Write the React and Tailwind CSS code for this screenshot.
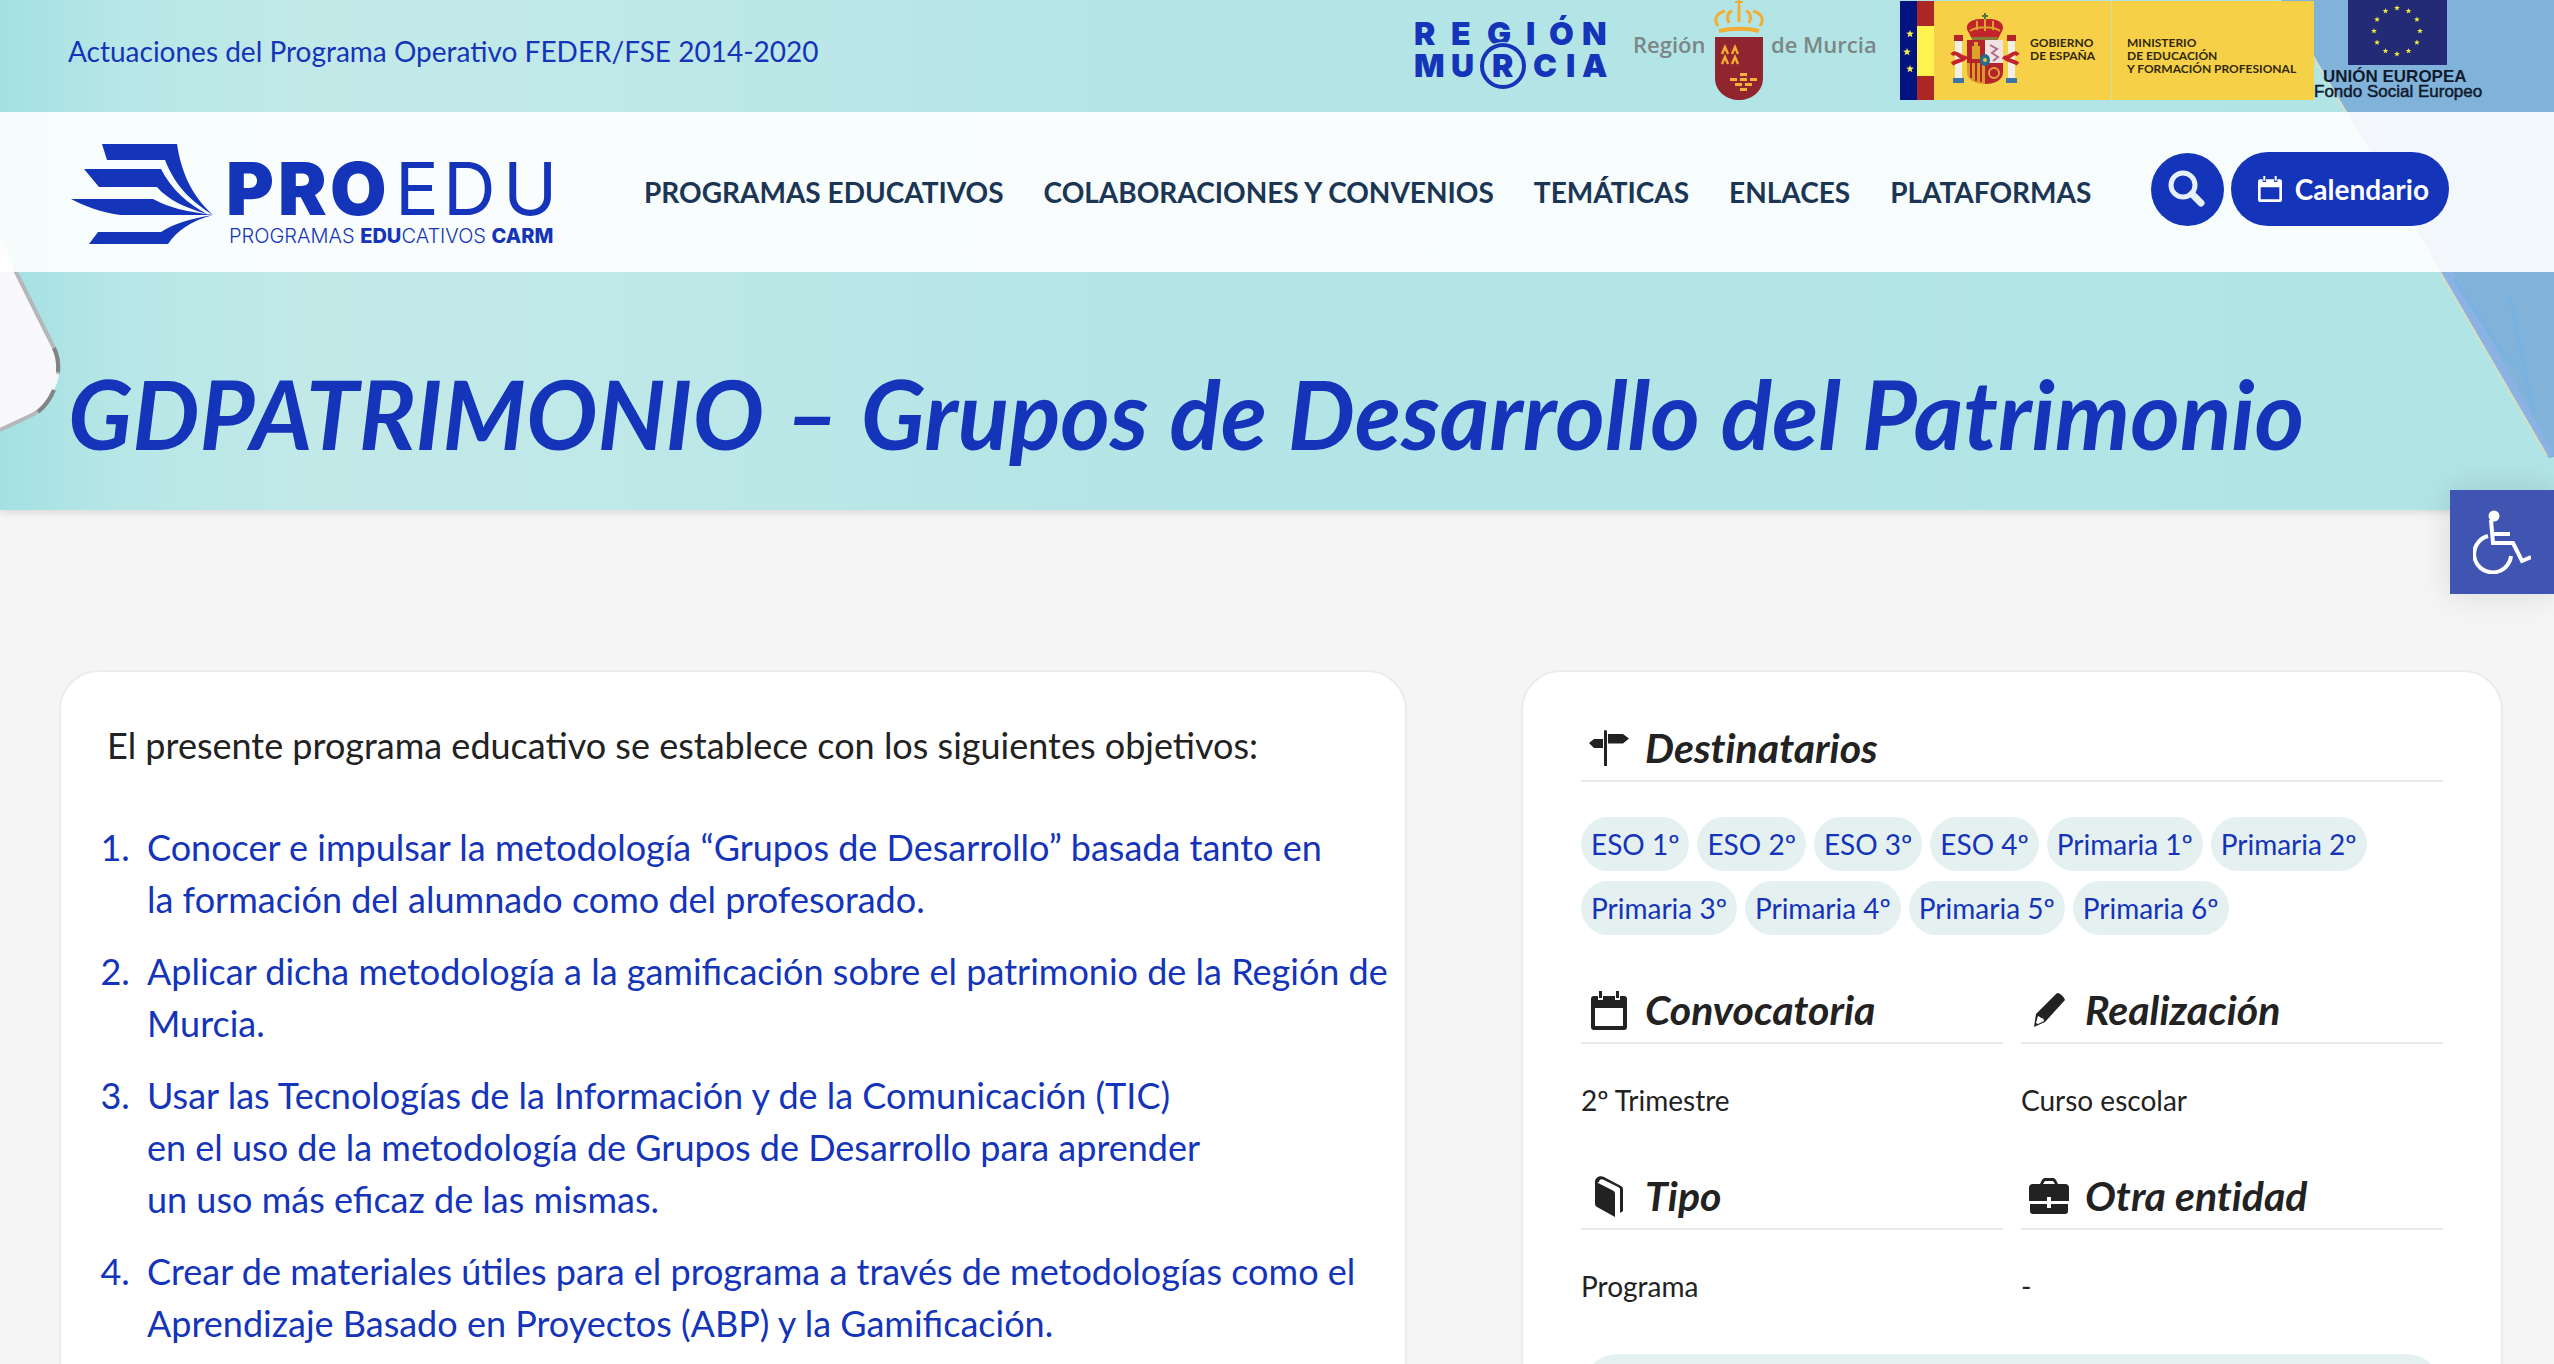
import React from "react";

const BLUE = "#1434ba";

const navItems = [
  "PROGRAMAS EDUCATIVOS",
  "COLABORACIONES Y CONVENIOS",
  "TEMÁTICAS",
  "ENLACES",
  "PLATAFORMAS",
];

const nb = (s) => s.replace(/ /g, "\u00a0");

const objetivos = [
  "Conocer e impulsar la metodología “Grupos de Desarrollo” basada tanto en " +
    nb("la formación del alumnado como del profesorado."),
  "Aplicar dicha metodología a la gamificación sobre el patrimonio de la Región de Murcia.",
  "Usar las Tecnologías de la Información y de la Comunicación (TIC) " +
    nb("en el uso de la metodología de Grupos de Desarrollo para aprender") +
    " " +
    nb("un uso más eficaz de las mismas."),
  "Crear de materiales útiles para el programa a través de metodologías como el Aprendizaje Basado en Proyectos (ABP) y la Gamificación.",
];

const destinatarios = [
  "ESO 1º",
  "ESO 2º",
  "ESO 3º",
  "ESO 4º",
  "Primaria 1º",
  "Primaria 2º",
  "Primaria 3º",
  "Primaria 4º",
  "Primaria 5º",
  "Primaria 6º",
];

function starPoints(cx, cy, r) {
  const pts = [];
  for (let i = 0; i < 10; i++) {
    const a = -Math.PI / 2 + (i * Math.PI) / 5;
    const q = i % 2 ? r * 0.42 : r;
    pts.push(`${(cx + q * Math.cos(a)).toFixed(1)},${(cy + q * Math.sin(a)).toFixed(1)}`);
  }
  return pts.join(" ");
}

function ProeduLogo() {
  return (
    <svg viewBox="0 0 490 104" className="h-[104px] w-[490px] overflow-visible" fill={BLUE} role="img" aria-label="PROEDU">
      <g transform="translate(0 4)">
        <path d="M34 0h75c4 26 13 50 36 71C124 58 107 42 97 16H39z" />
        <path d="M16 25h77c10 20 27 35 46 45C118 64 100 56 89 43H31z" />
        <path d="M3 55h82c14 8 34 13 60 16H52C32 68 16 62 3 55z" />
        <path d="M145 71C122 77 109 87 100 100H21l9-12h63c12-8 28-13 52-17z" />
        <g fontSize="73" fontFamily="Inter, sans-serif">
          <text x="158 210 262" y="71" fontWeight="900">PRO</text>
          <text x="327 375 435" y="71" fontWeight="400">EDU</text>
        </g>
        <text x="161" y="99" fontSize="20" fontFamily="Inter, sans-serif" fontWeight="300">
          PROGRAMAS{" "}
          <tspan fontWeight="800">EDU</tspan>CATIVOS{" "}
          <tspan fontWeight="800">CARM</tspan>
        </text>
      </g>
    </svg>
  );
}

function RegionMurciaLogo() {
  return (
    <svg viewBox="0 0 198 112" className="h-[112px] w-[198px]" fill={BLUE} role="img" aria-label="Región Murcia">
      <g fontFamily="Inter, sans-serif" fontWeight="900" fontSize="32">
        <text x="2 39 75 114 137 170" y="45">REGIÓN</text>
      </g>
      <circle cx="91" cy="66" r="24" fill="#b9e6e6" />
      <circle cx="91" cy="66" r="21" fill="none" stroke={BLUE} strokeWidth="4" />
      <g fontFamily="Inter, sans-serif" fontWeight="900" fontSize="32">
        <text x="2 39 80 121 154 170" y="77">MURCIA</text>
      </g>
    </svg>
  );
}

function EscudoMurciaLogo() {
  const blocks = [
    [26, 0], [16, 5], [26, 5], [36, 5], [21, 10], [31, 10], [26, 15],
  ];
  return (
    <svg viewBox="0 0 250 112" className="h-[112px] w-[250px]" role="img" aria-label="Región de Murcia">
      <g fill="#7c8686" fontFamily="'Open Sans', sans-serif" fontWeight="600" fontSize="22">
        <text x="3" y="53">Región</text>
        <text x="141" y="53">de Murcia</text>
      </g>
      <path d="M85 37h48v41c0 14-12 22-24 22S85 92 85 78z" fill="#90252f" />
      <g fill="none" stroke="#f2ad35" strokeWidth="3">
        <path d="M89 31c12-3 29-3 40 0" strokeWidth="4" />
        <path d="M88 26c-5-7-1-13 7-15M99 23c-3-6-1-11 3-12M109 22V5M119 23c3-6 1-11-3-12M130 26c5-7 1-13-7-15" />
        <path d="M109 0v6M105 2h8" strokeWidth="2" />
        <path d="M92 54l3-7 3 7M102 54l3-7 3 7M92 64l3-7 3 7M102 64l3-7 3 7" strokeWidth="2.4" />
      </g>
      <g fill="#f2b43b">
        {blocks.map(([x, y]) => (
          <rect key={`${x}-${y}`} x={x + 84} y={y + 73} width="7" height="3" />
        ))}
      </g>
    </svg>
  );
}

function GobiernoLogo() {
  return (
    <svg viewBox="0 0 414 112" className="h-[112px] w-[414px]" role="img" aria-label="Gobierno de España, Ministerio de Educación y Formación Profesional">
      <rect y="1" width="414" height="99" fill="#f6d046" />
      <rect y="1" width="17" height="99" fill="#03137f" />
      <rect x="17" y="1" width="17" height="99" fill="#ac2724" />
      <rect x="17" y="26" width="17" height="50" fill="#fff350" />
      <g fill="#f6ee4e">
        <polygon points={starPoints(10, 34, 4)} />
        <polygon points={starPoints(7, 52, 4)} />
        <polygon points={starPoints(10, 69, 4)} />
      </g>
      <rect x="211" y="1" width="1" height="99" fill="#cfe0a8" />
      <g transform="translate(52 13)">
        <path d="M33 0v7M30 3h6" stroke="#55713c" strokeWidth="2" />
        <path d="M17 20c-6-9 2-15 16-14 14-1 22 5 16 14l-3 6H20z" fill="#c3232b" />
        <path d="M18 18c6-5 24-5 30 0M33 6v12M25 8v9M41 8v9" stroke="#dba52c" strokeWidth="2" fill="none" />
        <path d="M20 24h26v3H20z" fill="#8b7a35" />
        <path d="M15 27h18v23H15z" fill="#b5232b" />
        <path d="M33 27h18v23H33z" fill="#efe3e4" />
        <path d="M15 50h18v21c-10 0-18-4-18-12z" fill="#d99a2a" />
        <path d="M33 50h18v9c0 8-8 12-18 12z" fill="#b5232b" />
        <path d="M19 50v15M24 50v18M29 50v19" stroke="#b5232b" strokeWidth="2" />
        <path d="M20 33h8v13h-8zM22 29h4v4h-4z" fill="#dba52c" />
        <path d="M38 32l7 4-5 4 6 4-5 4" stroke="#b26a86" strokeWidth="2" fill="none" />
        <circle cx="42" cy="60" r="5" fill="none" stroke="#e0a53a" strokeWidth="2" />
        <ellipse cx="33" cy="47" rx="5" ry="6" fill="#1f6e90" />
        <circle cx="33" cy="47" r="2" fill="#e8c13f" />
        <path d="M3 28h7v37H3zM56 28h7v37h-7z" fill="#f2efe6" />
        <path d="M2 22h9v6H2zM55 22h9v6h-9z" fill="#b5232b" />
        <path d="M0 42c4-6 10 6 15 2M0 51c5-4 9-2 14-7M66 42c-4-6-10 6-15 2M66 51c-5-4-9-2-14-7" stroke="#c3232b" strokeWidth="4" fill="none" />
        <path d="M1 65h11v5H1zM54 65h11v5H54z" fill="#3f74a8" />
      </g>
      <g fill="#30290c" fontFamily="Lato, sans-serif" fontWeight="700" fontSize="12">
        <text x="130" y="47">GOBIERNO</text>
        <text x="130" y="60">DE ESPAÑA</text>
        <text x="227" y="47">MINISTERIO</text>
        <text x="227" y="60">DE EDUCACIÓN</text>
        <text x="227" y="73">Y FORMACIÓN PROFESIONAL</text>
      </g>
    </svg>
  );
}

function UnionEuropeaLogo() {
  return (
    <svg viewBox="0 0 170 112" className="h-[112px] w-[170px]" role="img" aria-label="Unión Europea, Fondo Social Europeo">
      <rect x="34" width="99" height="65" fill="#232a76" />
      <g fill="#f3ea3c">
        {Array.from({ length: 12 }, (_, i) => {
          const a = (i * Math.PI) / 6;
          return <polygon key={i} points={starPoints(83 + 23 * Math.sin(a), 31 - 23 * Math.cos(a), 3)} />;
        })}
      </g>
      <g fill="#101a2c" stroke="#101a2c" fontFamily="'Liberation Sans', sans-serif">
        <text x="9" y="82" fontSize="17" fontWeight="700" stroke="none">UNIÓN EUROPEA</text>
        <text x="0" y="97" fontSize="17" strokeWidth="0.5">Fondo Social Europeo</text>
      </g>
    </svg>
  );
}

function SearchIcon() {
  return (
    <svg viewBox="0 0 38 38" className="size-[38px]" fill="none" stroke="#e6f0fa" aria-hidden="true">
      <circle cx="15" cy="15" r="12" strokeWidth="5" />
      <path d="M24 24l9 9" strokeWidth="7" strokeLinecap="round" />
    </svg>
  );
}

function CalendarIcon({ className }) {
  return (
    <svg viewBox="0 0 36 39" className={className} fill="currentColor" aria-hidden="true">
      <path
        fillRule="evenodd"
        d="M3 5h4v4h5V5h12v4h5V5h4q3 0 3 3v28q0 3-3 3H3q-3 0-3-3V8q0-3 3-3zM4 17v18h28V17z"
      />
      <path d="M8 0h3v7H8zM25 0h3v7h-3z" />
    </svg>
  );
}

function SignpostIcon() {
  return (
    <svg viewBox="0 0 40 36" className="h-9 w-10" fill="currentColor" aria-hidden="true">
      <path d="M15 1q1-2 3 0v35h-3zM14 9v9H5L0 13l5-4zM19 4h15l6 4.500-6 5H19z" />
    </svg>
  );
}

function PencilIcon() {
  return (
    <svg viewBox="0 0 31 34" className="h-[34px] w-[31px]" fill="currentColor" aria-hidden="true">
      <path fillRule="evenodd" d="M24 0c3 1 6 4 7 7L11 29 0 34 2 21 22 1q1-1 2-1zM4 23L2 30l2 1 6-3c0-2-1-3-3-3-1-1-2-2-3-2z" />
    </svg>
  );
}

function BookIcon() {
  return (
    <svg viewBox="0 0 28 41" className="h-[41px] w-7" fill="currentColor" aria-hidden="true">
      <path d="M1 6l16 8q3 1 3 4v23L2 31q-2-1-2-3V6C0 2 4-1 9 1l17 9q2 1 2 3v22l-3 2V13q0-1-2-2L9 4C6 2 4 4 4 6l-3 1z" />
    </svg>
  );
}

function BriefcaseIcon() {
  return (
    <svg viewBox="0 0 40 36" className="h-9 w-10" fill="currentColor" aria-hidden="true">
      <path d="M11 6l2-4q1-2 3-2h8q2 0 3 2l2 4h7q4 0 4 4v13H22v-4h-4v4H0V10q0-4 4-4zM14 6h12l-2-3h-8zM1 26h17v4h4v-4h17v7q0 3-3 3H4q-3 0-3-3z" fillRule="evenodd" />
    </svg>
  );
}

function WheelchairIcon() {
  return (
    <svg viewBox="0 0 58 64" className="h-16 w-[58px]" fill="none" stroke="#fff" strokeWidth="4" aria-hidden="true">
      <circle cx="21" cy="6" r="5.500" fill="#fff" stroke="none" />
      <path d="M18 10l2 23h20l9 18 9-4" />
      <path d="M21 24h16" />
      <path d="M15 26A18.500 18.500 0 1 0 38 46" />
    </svg>
  );
}

function Backdrop() {
  return (
    <div className="absolute inset-0 -z-10 flex justify-between overflow-hidden bg-[linear-gradient(90deg,#a3e0e2_0%,#b8e7e7_5%,#c2e9e8_13%,#bfe8e8_24%,#b5e5e6_42%,#b3e5e6_60%,#b1e4e5_100%)]">
      <svg viewBox="0 0 70 510" className="h-[510px] w-[70px]" aria-hidden="true">
        <path d="M0 235L16 272 54 348Q64 372 54 390 46 408 32 415L0 430z" fill="#f8f8fb" />
        <path d="M14 268L54 348Q60 360 58 374M54 390Q46 408 32 415L0 430" fill="none" stroke="#b4b8ba" strokeWidth="4" />
        <path d="M54 348Q59 358 58 372M54 390Q48 404 38 412" fill="none" stroke="#808486" strokeWidth="4" />
      </svg>
      <svg viewBox="0 0 280 510" className="h-[510px] w-[280px]" aria-hidden="true">
        <path d="M6 0L72 112 166 272 273 456q2 3 7 1V0z" fill="#81b2da" />
        <path d="M72 112L166 272 273 456l7-2L190 290 95 112z" fill="#8ab2e2" />
        <path d="M6 0L72 112 166 272 273 456" fill="none" stroke="#d5dfc4" strokeWidth="2" />
        <path d="M180 278l44 68q8 14 24 23M236 296l24 120" fill="none" stroke="#76b3e2" strokeWidth="3" />
      </svg>
    </div>
  );
}

function SectionTitle({ icon, children }) {
  return (
    <h2 className="flex h-[66px] items-center gap-4 border-b-2 border-[#e9e9e9] pl-2 text-[41px] leading-[48px] font-bold italic [font-variant-ligatures:none]">
      <span className="flex w-10 justify-center">{icon}</span>
      {children}
    </h2>
  );
}

function Field({ icon, title, children }) {
  return (
    <section>
      <SectionTitle icon={icon}>{title}</SectionTitle>
      <p className="pt-[34px] pb-0.5 text-[28px] leading-[44px]">{children}</p>
    </section>
  );
}

export default function App() {
  return (
    <div className="relative h-screen overflow-hidden bg-[#f5f5f5] font-['Lato',sans-serif] text-[#222]">
      <header className="relative isolate shadow-[0_2px_8px_rgba(0,0,0,0.12)]">
        <Backdrop />
        <div className="flex h-28 items-start justify-between pr-[70px] pl-[68px]">
          <a href="#feder" className="pt-[31px] text-[28px] leading-10 text-[#1434ba]">
            Actuaciones del Programa Operativo FEDER/FSE 2014-2020
          </a>
          <div className="flex">
            <span className="mr-5"><RegionMurciaLogo /></span>
            <span className="mr-5"><EscudoMurciaLogo /></span>
            <GobiernoLogo />
            <UnionEuropeaLogo />
          </div>
        </div>

        <div className="flex h-40 items-center bg-white/90 pr-[105px] pl-[68px]">
          <a href="#inicio">
            <ProeduLogo />
          </a>
          <nav className="ml-[86px] flex gap-10 text-[28px] leading-10 font-bold text-[#1b3654]">
            {navItems.map((item) => (
              <a key={item} href="#menu" className="whitespace-nowrap">
                {item}
              </a>
            ))}
          </nav>
          <div className="mb-1.5 ml-auto flex items-center gap-[7px]">
            <button type="button" aria-label="Buscar" className="flex size-[73px] items-center justify-center rounded-full bg-[#1434ba]">
              <SearchIcon />
            </button>
            <a href="#calendario" className="flex h-[74px] items-center gap-3 rounded-full bg-[#1434ba] pr-5 pl-[26px] text-[28px] font-bold text-white">
              <CalendarIcon className="h-[26px] w-[26px]" />
              Calendario
            </a>
          </div>
        </div>

        <h1 className="flex h-[238px] items-center pt-11 pl-[68px] text-[95px] leading-[120px] font-bold whitespace-nowrap text-[#1434ba] italic">
          GDPATRIMONIO – Grupos de Desarrollo del Patrimonio
        </h1>
      </header>

      <button
        type="button"
        aria-label="Abrir barra de herramientas de accesibilidad"
        className="absolute top-[490px] right-0 flex size-[104px] items-center justify-center bg-[#4054b2] shadow-[0_0_30px_rgba(0,0,0,0.12)]"
      >
        <WheelchairIcon />
      </button>

      <main className="grid grid-cols-[1348fr_982fr] gap-[114px] pt-40 pr-[51px] pl-[59px]">
        <article className="rounded-[40px] border-2 border-[#ececec] bg-white pt-[47px] pr-4 pb-40 pl-8 text-[36px] leading-[52px]">
          <p className="pl-3.5">El presente programa educativo se establece con los siguientes objetivos:</p>
          <ol className="mt-[50px] flex list-decimal flex-col gap-5 pl-[46px] text-[#1434ba]">
            {objetivos.map((texto) => (
              <li key={texto} className="pl-2">{texto}</li>
            ))}
          </ol>
        </article>

        <aside className="rounded-[40px] border-2 border-[#ececec] bg-white px-[58px] pt-11 pb-20">
          <SectionTitle icon={<SignpostIcon />}>Destinatarios</SectionTitle>
          <ul className="mt-[35px] flex flex-wrap gap-x-2 gap-y-[10px] text-[28px] leading-[54px] text-[#1434ba]">
            {destinatarios.map((d) => (
              <li key={d}>
                <a href="#destinatario" className="block rounded-full bg-[#e5f0f1] px-[10px]">
                  {d}
                </a>
              </li>
            ))}
          </ul>
          <div className="mt-[43px] grid grid-cols-2 gap-x-[18px] gap-y-10">
            <Field icon={<CalendarIcon className="h-[39px] w-9" />} title="Convocatoria">2º Trimestre</Field>
            <Field icon={<PencilIcon />} title="Realización">Curso escolar</Field>
            <Field icon={<BookIcon />} title="Tipo">Programa</Field>
            <Field icon={<BriefcaseIcon />} title="Otra entidad">-</Field>
          </div>
          <div className="mt-[44px] h-[74px] rounded-full bg-[#e5f0f1]" />
        </aside>
      </main>
    </div>
  );
}
